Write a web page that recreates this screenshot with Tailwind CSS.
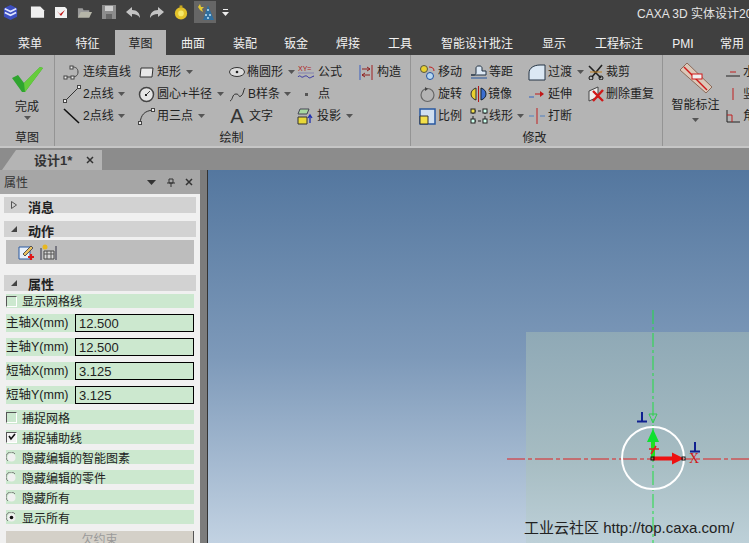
<!DOCTYPE html>
<html lang="zh">
<head>
<meta charset="UTF-8" />
<title>CAXA 3D 实体设计</title>
<script src="https://cdn.jsdelivr.net/npm/@tailwindcss/browser@4"></script>
</head>
<body class="w-[749px] h-[543px] overflow-hidden bg-[#b4b4b4] text-[12px] leading-none text-[#222] font-['Liberation_Sans','Noto_Sans_CJK_SC',sans-serif]">

<!-- title bar -->
<header class="h-[30px] bg-[#404040] flex items-center pb-[6px] relative overflow-hidden">
  <svg class="ml-[2px] w-[17px] h-[17px]" viewBox="0 0 18 18"><path d="M9 1l7 3.500v9L9 17l-7-3.500v-9z" fill="#3d4fc0"/><path d="M3 5l6 3 6-3M3 9l6 3 6-3" fill="none" stroke="#dfe4ff" stroke-width="1.800"/></svg>
  <svg class="ml-[11px] w-[15px] h-[14px]" viewBox="0 0 16 14"><path d="M1 1h10l4 4v8H1z" fill="#efefef"/></svg>
  <svg class="ml-[9px] w-[14px] h-[14px]" viewBox="0 0 14 14"><path d="M1 2h10l2 2v9H1z" fill="#f2f2f2"/><path d="M3 6l3 3 5-4-4 6z" fill="#c01818"/></svg>
  <svg class="ml-[9px] w-[16px] h-[13px]" viewBox="0 0 17 13"><path d="M1 12V2h5l1 2h6v2z" fill="#9a9a9a"/><path d="M1 12l3-6h12l-3 6z" fill="#b5b5a8"/></svg>
  <svg class="ml-[9px] w-[14px] h-[14px]" viewBox="0 0 14 14"><path d="M0 0h14v14H0z" fill="#8c8c8c"/><path d="M3 1h8v5H3z" fill="#cfcfcf"/><path d="M4 9h6v5H4z" fill="#666"/></svg>
  <svg class="ml-[9px] w-[16px] h-[13px]" viewBox="0 0 16 13"><path d="M1 6l6-5v3c5 0 8 3 8 8-2-3-4-4-8-4v3z" fill="#c4c4c4"/></svg>
  <svg class="ml-[8px] w-[16px] h-[13px]" viewBox="0 0 16 13"><path d="M15 6L9 1v3C4 4 1 7 1 12c2-3 4-4 8-4v3z" fill="#c4c4c4"/></svg>
  <svg class="ml-[8px] w-[16px] h-[17px]" viewBox="0 0 17 17"><circle cx="8.500" cy="9.500" r="6.500" fill="#e3c22a"/><circle cx="8.500" cy="9.500" r="3" fill="#f6e86a"/><path d="M7 1h3v3H7z" fill="#c9a820"/></svg>
  <div class="ml-[5px] w-[22px] h-[22px] bg-[#666] flex items-center justify-center">
    <svg class="w-[20px] h-[20px]" viewBox="0 0 20 20"><path d="M3 5l2-3 1 3 3 0-2 2 1 3-3-2z" fill="#e4c832"/><path d="M13 3l6 15H8z" fill="#2f6f9f"/><g fill="#bfe0f4"><circle cx="13" cy="8" r="1"/><circle cx="11" cy="13" r="1"/><circle cx="15" cy="13" r="1"/><circle cx="13" cy="16" r="1"/></g></svg>
  </div>
  <svg class="ml-[6px] w-[7px] h-[7px]" viewBox="0 0 7 7"><path d="M1 0h5v1H1zM0 3h7L3.500 7z" fill="#eee"/></svg>
  <span class="absolute left-[637px] top-[8px] whitespace-nowrap text-[#e4e4e4]">CAXA 3D 实体设计2016</span>
</header>

<!-- ribbon tabs -->
<nav class="h-[25px] bg-[#404040] flex overflow-hidden text-[#f2f2f2] whitespace-nowrap text-center">
  <div class="w-[60px] shrink-0 pt-[8px]">菜单</div>
  <div class="w-[55px] shrink-0 pt-[8px]">特征</div>
  <div class="w-[51px] shrink-0 pt-[8px] bg-[#b4b4b4] text-[#222]">草图</div>
  <div class="w-[54px] shrink-0 pt-[8px]">曲面</div>
  <div class="w-[50px] shrink-0 pt-[8px]">装配</div>
  <div class="w-[52px] shrink-0 pt-[8px]">钣金</div>
  <div class="w-[52px] shrink-0 pt-[8px]">焊接</div>
  <div class="w-[52px] shrink-0 pt-[8px]">工具</div>
  <div class="w-[102px] shrink-0 pt-[8px]">智能设计批注</div>
  <div class="w-[52px] shrink-0 pt-[8px]">显示</div>
  <div class="w-[78px] shrink-0 pt-[8px]">工程标注</div>
  <div class="w-[50px] shrink-0 pt-[8px]">PMI</div>
  <div class="w-[48px] shrink-0 pt-[8px]">常用</div>
</nav>

<!-- ribbon -->
<section class="h-[93px] flex overflow-hidden bg-[#b4b4b4] border-b-2 border-[#c6c6c6]">
  <div class="w-[55px] shrink-0 border-r border-[#949494] flex flex-col items-center">
    <svg class="mt-[10px] w-[34px] h-[28px]" viewBox="0 0 34 28"><path d="M2 13l6-3 6 8L30 2l3 1-18 24h-3z" fill="#2fa52f"/><path d="M14 18L30 2l3 1-18 24z" fill="#66cc3c"/></svg>
    <span class="mt-[8px]">完成</span>
    <svg class="mt-[3px] w-[7px] h-[4px]" viewBox="0 0 7 4"><path d="M0 0h7L3.500 4z" fill="#555"/></svg>
    <span class="mt-[12px]">草图</span>
  </div>

  <div class="w-[356px] shrink-0 border-r border-[#949494] flex flex-col">
    <div class="flex pt-[6px] h-[73px]">
      <div class="w-[83px] pl-[8px] flex flex-col">
        <div class="h-[22px] flex items-center gap-[2px] whitespace-nowrap"><svg class="w-[18px] h-[16px] shrink-0" viewBox="0 0 18 16"><path d="M2 13h7c3 0 6-1 6-5s-3-5-5-5H8" fill="none" stroke="#444"/><rect x="1" y="12" width="3" height="3" fill="#eee" stroke="#444"/><rect x="8" y="12" width="3" height="3" fill="#eee" stroke="#444"/><rect x="7" y="2" width="3" height="3" fill="#eee" stroke="#444"/></svg>连续直线</div>
        <div class="h-[22px] flex items-center gap-[2px] whitespace-nowrap"><svg class="w-[18px] h-[18px] shrink-0" viewBox="0 0 18 18"><path d="M2 16L15 3" stroke="#333"/><rect x="0.500" y="14.500" width="3" height="3" fill="#eee" stroke="#444"/><rect x="14.500" y="0.500" width="3" height="3" fill="#eee" stroke="#444"/></svg>2点线<svg class="ml-[2px] w-[7px] h-[4px]" viewBox="0 0 7 4"><path d="M0 0h7L3.500 4z" fill="#555"/></svg></div>
        <div class="h-[22px] flex items-center gap-[2px] whitespace-nowrap"><svg class="w-[18px] h-[18px] shrink-0" viewBox="0 0 18 18"><path d="M1 2l15 14" stroke="#111" stroke-width="1.600"/></svg>2点线<svg class="ml-[2px] w-[7px] h-[4px]" viewBox="0 0 7 4"><path d="M0 0h7L3.500 4z" fill="#555"/></svg></div>
      </div>
      <div class="w-[91px] flex flex-col">
        <div class="h-[22px] flex items-center gap-[2px] whitespace-nowrap"><svg class="w-[17px] h-[13px] shrink-0" viewBox="0 0 17 13"><path d="M3 2h12l-1 9H2z" fill="#e8e8e8" stroke="#333"/></svg>矩形<svg class="ml-[3px] w-[7px] h-[4px]" viewBox="0 0 7 4"><path d="M0 0h7L3.500 4z" fill="#555"/></svg></div>
        <div class="h-[22px] flex items-center gap-[2px] whitespace-nowrap"><svg class="w-[17px] h-[17px] shrink-0" viewBox="0 0 17 17"><circle cx="8.500" cy="8.500" r="7" fill="#e4e4e4" stroke="#444" stroke-width="1.500"/><path d="M8 9l4-4" stroke="#444"/><rect x="7" y="8" width="2" height="2" fill="#222"/></svg>圆心+半径<svg class="ml-[3px] w-[7px] h-[4px]" viewBox="0 0 7 4"><path d="M0 0h7L3.500 4z" fill="#555"/></svg></div>
        <div class="h-[22px] flex items-center gap-[2px] whitespace-nowrap"><svg class="w-[17px] h-[17px] shrink-0" viewBox="0 0 17 17"><path d="M2 15C3 7 6 3 15 2" fill="none" stroke="#333"/><rect x="0.500" y="13.500" width="3" height="3" fill="#eee" stroke="#444"/><rect x="13.500" y="0.500" width="3" height="3" fill="#eee" stroke="#444"/></svg>用三点<svg class="ml-[3px] w-[7px] h-[4px]" viewBox="0 0 7 4"><path d="M0 0h7L3.500 4z" fill="#555"/></svg></div>
      </div>
      <div class="w-[68px] flex flex-col">
        <div class="h-[22px] flex items-center gap-[2px] whitespace-nowrap"><svg class="w-[16px] h-[12px] shrink-0" viewBox="0 0 16 12"><ellipse cx="8" cy="6" rx="7.500" ry="4.500" fill="#ddd" stroke="#333"/><circle cx="8" cy="6" r="1.300" fill="#222"/></svg>椭圆形<svg class="ml-[3px] w-[7px] h-[4px]" viewBox="0 0 7 4"><path d="M0 0h7L3.500 4z" fill="#555"/></svg></div>
        <div class="h-[22px] flex items-center gap-[2px] whitespace-nowrap"><svg class="w-[17px] h-[17px] shrink-0" viewBox="0 0 17 17"><path d="M1 15c3-1 2-7 6-7s2 4 5 2 2-6 4-8" fill="none" stroke="#333"/></svg>B样条<svg class="ml-[2px] w-[7px] h-[4px]" viewBox="0 0 7 4"><path d="M0 0h7L3.500 4z" fill="#555"/></svg></div>
        <div class="h-[22px] flex items-center gap-[4px] whitespace-nowrap"><span class="w-[16px] text-center text-[20px] leading-[20px] text-[#333]">A</span>文字</div>
      </div>
      <div class="w-[62px] flex flex-col">
        <div class="h-[22px] flex items-center gap-[2px] whitespace-nowrap"><svg class="w-[19px] h-[15px] shrink-0" viewBox="0 0 19 15"><text x="1" y="6" font-size="7" font-family="Liberation Sans" fill="#b01818">XY=</text><path d="M1 8h16" stroke="#7070b0" stroke-width="0.700"/><path d="M1 12c2-3 3 1 5 0s3-2 5 0 3 0 6-1" fill="none" stroke="#3030a0"/></svg>公式</div>
        <div class="h-[22px] flex items-center whitespace-nowrap pl-[8px]"><span class="w-[3px] h-[3px] bg-[#555] mr-[10px]"></span>点</div>
        <div class="h-[22px] flex items-center gap-[2px] whitespace-nowrap"><svg class="w-[18px] h-[17px] shrink-0" viewBox="0 0 18 17"><path d="M3 1h9l-2 5H1z" fill="#a8d8a0" stroke="#445"/><path d="M1 9h9v7H1z" fill="#e8d838" stroke="#333"/><path d="M13 15V8M11 10l2-3 2 3" fill="none" stroke="#2030b0" stroke-width="1.300"/></svg>投影<svg class="ml-[3px] w-[7px] h-[4px]" viewBox="0 0 7 4"><path d="M0 0h7L3.500 4z" fill="#555"/></svg></div>
      </div>
      <div class="flex-1 flex flex-col">
        <div class="h-[22px] flex items-center gap-[4px] whitespace-nowrap"><svg class="w-[14px] h-[15px] shrink-0" viewBox="0 0 14 15"><path d="M1 0v15" stroke="#3a5fc0"/><path d="M13 0v15" stroke="#a02020"/><path d="M3 4h8M8 2l3 2-3 2M11 10H3M6 8l-3 2 3 2" fill="none" stroke="#902020"/></svg>构造</div>
      </div>
    </div>
    <div class="text-center pt-[4px] pr-[2px]">绘制</div>
  </div>

  <div class="w-[252px] shrink-0 border-r border-[#949494] flex flex-col">
    <div class="flex pt-[6px] h-[73px]">
      <div class="w-[59px] pl-[8px] flex flex-col">
        <div class="h-[22px] flex items-center gap-[2px] whitespace-nowrap"><svg class="w-[17px] h-[17px] shrink-0" viewBox="0 0 17 17"><circle cx="5" cy="5" r="3.500" fill="#e8d030" stroke="#554"/><circle cx="11" cy="12" r="3.500" fill="#b8d8f0" stroke="#2050a0"/><path d="M10 3c3 0 5 1 5 4" fill="none" stroke="#c02020"/></svg>移动</div>
        <div class="h-[22px] flex items-center gap-[2px] whitespace-nowrap"><svg class="w-[17px] h-[17px] shrink-0" viewBox="0 0 17 17"><circle cx="8.500" cy="9" r="6.500" fill="none" stroke="#666" stroke-width="1.200"/><path d="M6 1l3 2-3 2z" fill="#444"/></svg>旋转</div>
        <div class="h-[22px] flex items-center gap-[2px] whitespace-nowrap"><svg class="w-[17px] h-[17px] shrink-0" viewBox="0 0 17 17"><path d="M1 1h15v15H1z" fill="#cfdff0" stroke="#2858a0" stroke-width="1.500"/><path d="M1 8h8v8H1z" fill="#f3e04a" stroke="#333"/></svg>比例</div>
      </div>
      <div class="w-[58px] flex flex-col">
        <div class="h-[22px] flex items-center gap-[1px] whitespace-nowrap"><svg class="w-[18px] h-[14px] shrink-0" viewBox="0 0 18 14"><path d="M1 10h3c1 0 2-1 2-2V3c0-1 1-2 2-2h2c1 0 2 1 2 2v3h4v4z" fill="#dce8f4" stroke="#234"/><path d="M1 13h16" stroke="#2858a0"/></svg>等距</div>
        <div class="h-[22px] flex items-center gap-[1px] whitespace-nowrap"><svg class="w-[17px] h-[16px] shrink-0" viewBox="0 0 17 16"><path d="M6 2C3 3 1 5 1 8s2 5 5 6z" fill="#e8d030" stroke="#333"/><path d="M11 2c3 1 5 3 5 6s-2 5-5 6z" fill="#3a6ed0" stroke="#123"/><path d="M8.500 0v16" stroke="#b01818"/></svg>镜像</div>
        <div class="h-[22px] flex items-center gap-[1px] whitespace-nowrap"><svg class="w-[18px] h-[16px] shrink-0" viewBox="0 0 18 16"><path d="M3 3h12M3 13h12M3 3v10M15 3v10" fill="none" stroke="#222" stroke-dasharray="3 2"/><rect x="1" y="1" width="4" height="4" fill="#f3e04a" stroke="#222"/><rect x="13" y="1" width="4" height="4" fill="#cfe" stroke="#222"/><rect x="1" y="11" width="4" height="4" fill="#cfe" stroke="#222"/><rect x="13" y="11" width="4" height="4" fill="#cfe" stroke="#222"/></svg>线形<svg class="ml-[3px] w-[7px] h-[4px]" viewBox="0 0 7 4"><path d="M0 0h7L3.500 4z" fill="#555"/></svg></div>
      </div>
      <div class="w-[60px] flex flex-col">
        <div class="h-[22px] flex items-center gap-[2px] whitespace-nowrap"><svg class="w-[18px] h-[17px] shrink-0" viewBox="0 0 18 17"><path d="M1 16V9C1 4 6 1 12 1h5v15z" fill="#dbe8f4" stroke="#234"/></svg>过渡<svg class="ml-[3px] w-[7px] h-[4px]" viewBox="0 0 7 4"><path d="M0 0h7L3.500 4z" fill="#555"/></svg></div>
        <div class="h-[22px] flex items-center gap-[2px] whitespace-nowrap"><svg class="w-[18px] h-[10px] shrink-0" viewBox="0 0 18 10"><path d="M1 8h5" stroke="#3060c0"/><path d="M7 5h8" stroke="#c01818"/><path d="M12 2l4 3-4 3z" fill="#c01818"/></svg>延伸</div>
        <div class="h-[22px] flex items-center gap-[2px] whitespace-nowrap"><svg class="w-[18px] h-[16px] shrink-0" viewBox="0 0 18 16"><path d="M1 8h5M12 8h5" stroke="#5080c0"/><path d="M9 0v16" stroke="#c02020"/></svg>打断</div>
      </div>
      <div class="flex-1 flex flex-col">
        <div class="h-[22px] flex items-center gap-[2px] whitespace-nowrap"><svg class="w-[16px] h-[16px] shrink-0" viewBox="0 0 16 16"><path d="M1 2l12 12M14 1L4 13" stroke="#222" stroke-width="1.600"/><circle cx="3" cy="14" r="2" fill="none" stroke="#111"/><circle cx="13" cy="14" r="2" fill="none" stroke="#111"/><path d="M2 8h12" stroke="#c08020"/></svg>裁剪</div>
        <div class="h-[22px] flex items-center gap-[2px] whitespace-nowrap"><svg class="w-[16px] h-[16px] shrink-0" viewBox="0 0 16 16"><path d="M1 5l9-4v10l-9 4z" fill="#eee" stroke="#444"/><path d="M5 5l10 10M15 4L5 15" stroke="#d01818" stroke-width="2.400"/></svg>删除重复</div>
      </div>
    </div>
    <div class="text-center pt-[4px] pr-[4px]">修改</div>
  </div>

  <div class="flex-1 flex overflow-hidden">
    <div class="w-[63px] shrink-0 flex flex-col items-center pl-[2px]">
      <svg class="mt-[7px] w-[34px] h-[32px]" viewBox="0 0 34 32"><path d="M1 8l7-7 25 24-6 6z" fill="#dcc8b8" stroke="#8a6a5a"/><path d="M5 5l23 23" stroke="#d01818" stroke-width="1.500"/><rect x="13" y="12" width="10" height="5" fill="#f0f0f0" stroke="#d01818"/></svg>
      <span class="mt-[5px] whitespace-nowrap">智能标注</span>
      <svg class="mt-[7px] w-[7px] h-[4px]" viewBox="0 0 7 4"><path d="M0 0h7L3.500 4z" fill="#555"/></svg>
    </div>
    <div class="flex flex-col pt-[6px]">
      <div class="h-[22px] flex items-center gap-[3px] whitespace-nowrap"><svg class="w-[14px] h-[10px] shrink-0" viewBox="0 0 14 10"><path d="M0 9h14" stroke="#222"/><path d="M4 5h6" stroke="#c02020"/></svg>水平</div>
      <div class="h-[22px] flex items-center gap-[3px] whitespace-nowrap"><svg class="w-[14px] h-[14px] shrink-0" viewBox="0 0 14 14"><path d="M7 1v12" stroke="#c02020"/></svg>竖直</div>
      <div class="h-[22px] flex items-center gap-[3px] whitespace-nowrap"><svg class="w-[14px] h-[14px] shrink-0" viewBox="0 0 14 14"><path d="M1 1v12h13" fill="none" stroke="#222"/><path d="M1 6h5v7" fill="none" stroke="#c02020"/></svg>角度</div>
    </div>
  </div>
</section>

<!-- doc tab strip -->
<div class="h-[22px] bg-[#8c8c8c] flex items-end">
  <div class="ml-[2px] w-[100px] h-[20px] bg-[#b4b4b4] flex items-center pl-[32px] gap-[14px] [clip-path:polygon(14px_0,100%_0,100%_100%,0_100%)]">
    <span class="font-bold text-[13px] text-[#333] whitespace-nowrap">设计1*</span>
    <svg class="w-[8px] h-[8px]" viewBox="0 0 8 8"><path d="M1 1l6 6M7 1L1 7" stroke="#333" stroke-width="1.500"/></svg>
  </div>
</div>

<!-- main -->
<main class="h-[373px] flex bg-[#8c8c8c]">
  <aside class="w-[200px] shrink-0 flex flex-col overflow-hidden">
    <div class="h-[24px] shrink-0 bg-[#a6a6a6] flex items-center pl-[4px] text-[#333]">
      <span class="flex-1 pt-[1px]">属性</span>
      <svg class="w-[9px] h-[5px]" viewBox="0 0 9 5"><path d="M0 0h9L4.500 5z" fill="#333"/></svg>
      <svg class="ml-[11px] w-[8px] h-[9px]" viewBox="0 0 8 9"><path d="M2 1h4v4H2zM0 5h8M4 5v4" fill="none" stroke="#333"/></svg>
      <svg class="ml-[10px] mr-[7px] w-[8px] h-[8px]" viewBox="0 0 8 8"><path d="M1 1l6 6M7 1L1 7" stroke="#333" stroke-width="1.500"/></svg>
    </div>
    <div class="h-[349px] shrink-0 bg-[#f0f0f0] flex flex-col px-[6px] pt-[3px] overflow-hidden">
      <div class="shrink-0 -mx-[2px] h-[16px] bg-[#d2d2d2] flex items-center pl-[7px] gap-[11px] font-bold text-[13px]">
        <svg class="w-[6px] h-[8px]" viewBox="0 0 6 8"><path d="M0.500 0.500L5.500 4 0.500 7.500z" fill="none" stroke="#555"/></svg><span class="pt-[4px]">消息</span>
      </div>
      <div class="shrink-0 -mx-[2px] mt-[8px] h-[16px] bg-[#d2d2d2] flex items-center pl-[7px] gap-[11px] font-bold text-[13px]">
        <svg class="w-[6px] h-[6px]" viewBox="0 0 6 6"><path d="M6 0v6H0z" fill="#444"/></svg><span class="pt-[4px]">动作</span>
      </div>
      <div class="shrink-0 mt-[3px] h-[24px] bg-[#bdbdbd] flex items-center pl-[12px] gap-[5px]">
        <svg class="w-[17px] h-[17px]" viewBox="0 0 17 17"><path d="M1 3h11v12H1z" fill="#e8f0fa" stroke="#2858a0"/><path d="M5 10l8-8 2 2-8 8z" fill="#e8c060" stroke="#555"/><path d="M10 13h6M13 10v6" stroke="#e01818" stroke-width="2.200"/></svg>
        <svg class="w-[17px] h-[17px]" viewBox="0 0 17 17"><path d="M1 4v12M16 2v14" stroke="#334"/><path d="M4 7h10v8H4z" fill="#d8d8d8" stroke="#444"/><path d="M4 10h10M7 7v8M11 7v8" stroke="#555"/><circle cx="5" cy="3" r="2.500" fill="#e8b820"/></svg>
      </div>
      <div class="shrink-0 -mx-[2px] mt-[11px] h-[16px] bg-[#d2d2d2] flex items-center pl-[7px] gap-[11px] font-bold text-[13px]">
        <svg class="w-[6px] h-[6px]" viewBox="0 0 6 6"><path d="M6 0v6H0z" fill="#444"/></svg><span class="pt-[3px]">属性</span>
      </div>
      <label class="shrink-0 mt-[3px] h-[14px] bg-[#cce8cf] flex items-center gap-[5px]"><span class="w-[11px] h-[11px] bg-[#cce8cf] border border-t-[#555] border-l-[#555] border-r-white border-b-white"></span><span class="pt-[2px]">显示网格线</span></label>
      <div class="shrink-0 mt-[6px] h-[18px] flex text-[12.500px]"><span class="w-[69px] bg-[#cce8cf] flex items-center whitespace-nowrap">主轴X(mm)</span><span class="flex-1 border border-black bg-[#cce8cf] flex items-center pl-[3px] text-[13px]">12.500</span></div>
      <div class="shrink-0 mt-[6px] h-[18px] flex text-[12.500px]"><span class="w-[69px] bg-[#cce8cf] flex items-center whitespace-nowrap">主轴Y(mm)</span><span class="flex-1 border border-black bg-[#cce8cf] flex items-center pl-[3px] text-[13px]">12.500</span></div>
      <div class="shrink-0 mt-[6px] h-[18px] flex text-[12.500px]"><span class="w-[69px] bg-[#cce8cf] flex items-center whitespace-nowrap">短轴X(mm)</span><span class="flex-1 border border-black bg-[#cce8cf] flex items-center pl-[3px] text-[13px]">3.125</span></div>
      <div class="shrink-0 mt-[6px] h-[18px] flex text-[12.500px]"><span class="w-[69px] bg-[#cce8cf] flex items-center whitespace-nowrap">短轴Y(mm)</span><span class="flex-1 border border-black bg-[#cce8cf] flex items-center pl-[3px] text-[13px]">3.125</span></div>
      <label class="shrink-0 mt-[6px] h-[14px] bg-[#cce8cf] flex items-center gap-[5px]"><span class="w-[11px] h-[11px] bg-[#cce8cf] border border-t-[#555] border-l-[#555] border-r-white border-b-white"></span><span class="pt-[4px]">捕捉网格</span></label>
      <label class="shrink-0 mt-[6px] h-[14px] bg-[#cce8cf] flex items-center gap-[5px]"><span class="w-[11px] h-[11px] bg-[#f4f4f4] border border-t-[#555] border-l-[#555] border-r-white border-b-white flex items-center justify-center"><svg class="w-[8px] h-[8px]" viewBox="0 0 8 8"><path d="M1 3l2 3 4-5" fill="none" stroke="#111" stroke-width="1.600"/></svg></span><span class="pt-[4px]">捕捉辅助线</span></label>
      <label class="shrink-0 mt-[6px] h-[14px] bg-[#cce8cf] flex items-center gap-[5px]"><svg class="w-[11px] h-[11px]" viewBox="0 0 11 11"><path d="M9 2A5 5 0 1 0 2 9" fill="none" stroke="#777"/><circle cx="5.500" cy="5.500" r="4" fill="#f0f0f0"/></svg><span class="pt-[4px]">隐藏编辑的智能图素</span></label>
      <label class="shrink-0 mt-[6px] h-[14px] bg-[#cce8cf] flex items-center gap-[5px]"><svg class="w-[11px] h-[11px]" viewBox="0 0 11 11"><path d="M9 2A5 5 0 1 0 2 9" fill="none" stroke="#777"/><circle cx="5.500" cy="5.500" r="4" fill="#f0f0f0"/></svg><span class="pt-[4px]">隐藏编辑的零件</span></label>
      <label class="shrink-0 mt-[6px] h-[14px] bg-[#cce8cf] flex items-center gap-[5px]"><svg class="w-[11px] h-[11px]" viewBox="0 0 11 11"><path d="M9 2A5 5 0 1 0 2 9" fill="none" stroke="#777"/><circle cx="5.500" cy="5.500" r="4" fill="#f0f0f0"/></svg><span class="pt-[4px]">隐藏所有</span></label>
      <label class="shrink-0 mt-[6px] h-[14px] bg-[#cce8cf] flex items-center gap-[5px]"><svg class="w-[11px] h-[11px]" viewBox="0 0 11 11"><path d="M9 2A5 5 0 1 0 2 9" fill="none" stroke="#777"/><circle cx="5.500" cy="5.500" r="4" fill="#f0f0f0"/><circle cx="5.500" cy="5.500" r="1.800" fill="#111"/></svg><span class="pt-[4px]">显示所有</span></label>
      <button class="shrink-0 mt-[7px] h-[18px] bg-[#d4d0c8] text-[#9a9a9a] border-r border-[#555]">欠约束</button>
    </div>
  </aside>
  <div class="w-[7px] shrink-0 bg-[#7c7c7c]"></div>

  <!-- 3D canvas -->
  <div class="flex-1 relative overflow-hidden border-l border-[#333] bg-[linear-gradient(180deg,#54779f_0%,#7d99b9_50%,#c2d2e2_100%)]">
    <div class="absolute left-[318px] top-[162px] right-0 bottom-0 bg-[linear-gradient(180deg,#8fa9b6_0%,#a6bcc2_60%,#bdd0d8_100%)]"></div>
    <svg class="absolute left-0 top-0 w-[541px] h-[373px]" viewBox="208 170 541 373">
      <path d="M653 310V543" stroke="#22dd44" stroke-dasharray="14 3 3 3"/>
      <path d="M507 459H749" stroke="#e02020" stroke-dasharray="18 3 4 3"/>
      <circle cx="653" cy="458" r="31" fill="none" stroke="#fff" stroke-width="2"/>
      <path d="M653 458V441" stroke="#20e020" stroke-width="4"/>
      <path d="M653 429l6 13h-12z" fill="#10e030"/>
      <path d="M649 414h8l-4 9z" fill="none" stroke="#30cc50"/>
      <path d="M649 449h10M651 454l5-8" stroke="#e02020" stroke-width="1.500"/>
      <path d="M653 458.500h21" stroke="#ee1010" stroke-width="4"/>
      <path d="M684 458.500l-12-6v12z" fill="#ee1010"/>
      <rect x="651" y="457" width="3" height="3" fill="none" stroke="#111"/>
      <rect x="682" y="457" width="3" height="3" fill="none" stroke="#111"/>
      <path d="M637 421.500h10M642 412v9M690 451.500h10M695 442v9" stroke="#102090" stroke-width="2"/>
    </svg>
    <span class="absolute left-[316px] top-[350px] whitespace-nowrap text-[15px] text-[#222]">工业云社区 http://top.caxa.com/</span>
    <span class="absolute left-[481px] top-[282px] text-[14px] text-[#d01818] font-['Liberation_Serif',serif]">X</span>
  </div>
</main>

</body>
</html>
